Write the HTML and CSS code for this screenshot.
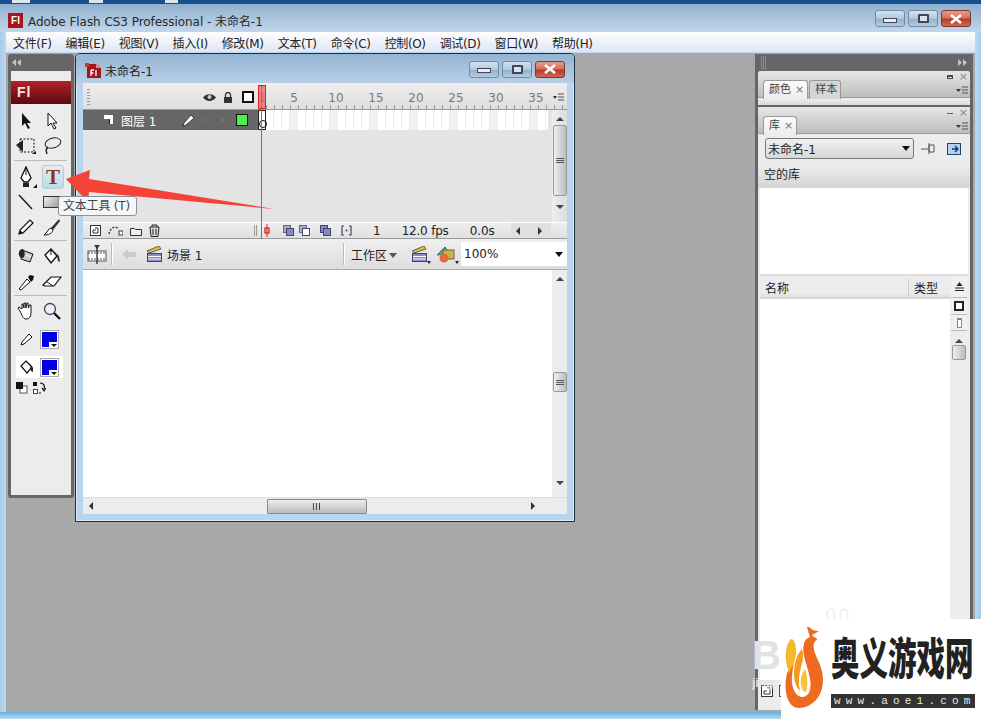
FILE: index.html
```html
<!DOCTYPE html>
<html lang="zh">
<head>
<meta charset="utf-8">
<title>Adobe Flash CS3 Professional</title>
<link rel="stylesheet" href="styles.css">
</head>
<body>
<div class="app">
  <div class="topstrip"><i class="tb a"></i><i class="tb b"></i><i class="tb c"></i></div>
  <header class="titlebar">
    <span class="fl-badge">Fl</span>
    <span class="apptitle">Adobe Flash CS3 Professional - 未命名-1</span>
    <div class="winbtns big">
      <button class="wb"><i class="g-min"></i></button><button class="wb"><i class="g-max"></i></button><button class="wb close"><svg width="14" height="10" viewBox="0 0 14 10"><path d="M2 1l10 8M12 1L2 9" stroke="#fff" stroke-width="2.6"/></svg></button>
    </div>
  </header>
  <nav class="menubar">
    <span>文件(F)</span><span>编辑(E)</span><span>视图(V)</span><span>插入(I)</span><span>修改(M)</span><span>文本(T)</span><span>命令(C)</span><span>控制(O)</span><span>调试(D)</span><span>窗口(W)</span><span>帮助(H)</span>
  </nav>
  <main class="workspace">
    <aside class="tools">
      <div class="dockhead"><svg width="10" height="7" viewBox="0 0 10 7"><path d="M4 0v7L0 3.500zM9 0v7L5 3.500z" fill="#c4c4c4"/></svg></div>
      <div class="toolsbody">
        <div class="logo">Fl</div>
        <div class="toolsec sec1">
          <div class="tool"><svg width="14" height="18" viewBox="0 0 14 18"><path d="M3 1v13l3-3 3 6 2-1-3-5h4z" fill="#111"/></svg></div>
          <div class="tool"><svg width="14" height="18" viewBox="0 0 14 18"><path d="M3 1v13l3-3 3 6 2-1-3-5h4z" fill="#fff" stroke="#111"/></svg></div>
          <div class="tool"><svg width="22" height="20" viewBox="0 0 22 20"><rect x="5" y="3" width="14" height="13" fill="none" stroke="#111" stroke-dasharray="2 1.5"/><path d="M1 9l7-5v12z" fill="#222"/><path d="M17 18h4v-3z" fill="#111"/></svg></div>
          <div class="tool"><svg width="20" height="20" viewBox="0 0 20 20"><ellipse cx="11" cy="7" rx="8" ry="5" fill="none" stroke="#222" transform="rotate(-15 11 7)"/><path d="M6 11l-2 3 1 4" fill="none" stroke="#222" stroke-width="1.4"/></svg></div>
        </div>
        <div class="toolsec sec2">
          <div class="tool hastri"><svg width="14" height="22" viewBox="0 0 14 22"><path d="M7 1l5 11-3 4H5l-3-4z" fill="#fff" stroke="#111" stroke-width="1.3"/><path d="M7 1v8" stroke="#111"/><rect x="4" y="17" width="6" height="4" fill="#222"/></svg></div>
          <div class="tool selected"><span class="tglyph">T</span></div>
          <div class="tool"><svg width="16" height="16" viewBox="0 0 16 16"><path d="M1 1l13 14" stroke="#111" stroke-width="1.3"/></svg></div>
          <div class="tool"><i class="recttool"></i></div>
          <div class="tool"><svg width="18" height="18" viewBox="0 0 18 18"><path d="M2 16l1-4L13 2l3 3L6 15z" fill="#fff" stroke="#111" stroke-width="1.2"/><path d="M2 16l1-4 3 3z" fill="#111"/></svg></div>
          <div class="tool"><svg width="18" height="18" viewBox="0 0 18 18"><path d="M16 1L8 10l2 2 7-9z" fill="#333"/><path d="M8 10c-3 1-3 3-4 4l-3 3c4 0 8-1 9-5z" fill="#fff" stroke="#111"/></svg></div>
        </div>
        <div class="toolsec sec3">
          <div class="tool"><svg width="18" height="16" viewBox="0 0 18 16"><path d="M5 2l11 4-3 8-9-3z" fill="#ccc" stroke="#111"/><path d="M6 1C3 1 1 4 2 7c1 3 3 4 5 2 1-2 1-6-1-8z" fill="#222"/><path d="M9 7l5 2" stroke="#fff"/></svg></div>
          <div class="tool"><svg width="18" height="18" viewBox="0 0 18 18"><path d="M8 2l6 7-6 7-6-8z" fill="#fff" stroke="#111" stroke-width="1.3"/><path d="M8 2v6" stroke="#111"/><path d="M11 4l5 5 1 6-2-1-1-5z" fill="#333"/></svg></div>
          <div class="tool"><svg width="18" height="18" viewBox="0 0 18 18"><path d="M2 16L10 6l3 3-9 8z" fill="#fff" stroke="#111"/><path d="M11 4l2-2 4 1-1 4-2 2z" fill="#111"/></svg></div>
          <div class="tool"><svg width="20" height="14" viewBox="0 0 20 14"><path d="M1 10l8-8h10l-7 9H3z" fill="#fff" stroke="#111" stroke-width="1.2"/><path d="M5 7l6 4" stroke="#111"/></svg></div>
        </div>
        <div class="toolsec sec4">
          <div class="tool"><svg width="18" height="18" viewBox="0 0 18 18"><path d="M3 9L1 6l1-1 3 2V2h1l1 4V1h1.500l.5 5 1-5h1l.5 5 1-3h1.500L14 10c0 4-1 7-5 7-3 0-4-4-6-8z" fill="#fff" stroke="#111"/></svg></div>
          <div class="tool"><svg width="18" height="18" viewBox="0 0 18 18"><circle cx="7" cy="7" r="5.500" fill="#eef" stroke="#444" stroke-width="1.300"/><path d="M11 11l6 6" stroke="#111" stroke-width="2.400"/></svg></div>
          <div class="tool short"><svg width="13" height="13" viewBox="0 0 13 13"><path d="M1 12l1-3 7-8 3 3-8 7z" fill="#fff" stroke="#111"/></svg></div>
          <div class="swatchwrap"><i class="swatch"></i></div>
        </div>
        <div class="fillrow">
          <div class="tool short"><svg width="15" height="15" viewBox="0 0 15 15"><path d="M7 1l6 6-5 6-6-7z" fill="#fff" stroke="#111" stroke-width="1.2"/><path d="M11 4l3 4v4l-2-1z" fill="#222"/></svg></div>
          <div class="swatchwrap"><i class="swatch"></i></div>
        </div>
        <div class="colorbtns">
          <svg width="12" height="12" viewBox="0 0 12 12"><rect x="4" y="4" width="7" height="7" fill="#fff" stroke="#555"/><rect x="0" y="0" width="7" height="7" fill="#111"/></svg>
          <svg width="13" height="13" viewBox="0 0 13 13"><rect x="0" y="0" width="4" height="4" fill="#111"/><rect x="0.500" y="7.500" width="4" height="4" fill="#fff" stroke="#444"/><path d="M7 1c4 0 5 3 4 6M9 6l2 3 2-3M8 11H6" fill="none" stroke="#111" stroke-width="1.200"/></svg>
        </div>
      </div>
    </aside>

    <section class="docwin">
      <div class="doctitle">
        <svg class="docicon" width="17" height="16" viewBox="0 0 17 16"><path d="M2 1h9l5 4v10H2z" fill="#a0161c"/><path d="M11 1l5 4h-5z" fill="#e88"/><rect x="0" y="0" width="4" height="4" fill="#c33"/><path d="M6 7v6M6 7h3M6 10h2.500M11 7v6" stroke="#fff" stroke-width="1.300"/></svg>
        <span class="doclabel">未命名-1</span>
        <div class="winbtns">
          <button class="wb"><i class="g-min"></i></button><button class="wb"><i class="g-max"></i></button><button class="wb close"><svg width="14" height="10" viewBox="0 0 14 10"><path d="M2 1l10 8M12 1L2 9" stroke="#fff" stroke-width="2.600"/></svg></button>
        </div>
      </div>
      <div class="timeline">
        <div class="tl-head">
          <div class="tl-headleft">
            <i class="grip"></i>
            <svg class="ic-eye" width="13" height="9" viewBox="0 0 13 9"><path d="M0 4.500C3 0 10 0 13 4.500 10 9 3 9 0 4.500z" fill="#333"/><circle cx="6.500" cy="4" r="2" fill="#ccc"/></svg>
            <svg class="ic-lock" width="10" height="11" viewBox="0 0 10 11"><path d="M2.500 5V3a2.500 2.500 0 015 0v2" fill="none" stroke="#333" stroke-width="1.300"/><rect x="1" y="5" width="8" height="6" fill="#333"/></svg>
            <i class="ic-square"></i>
          </div>
          <div class="ruler">
            <span class="r1">1</span><span class="r5">5</span><span>10</span><span>15</span><span>20</span><span>25</span><span>30</span><span>35</span>
            <svg class="panelmenu" width="12" height="9" viewBox="0 0 12 9"><path d="M0 3h4L2 6z" fill="#333"/><path d="M5 1h6M5 4h6M5 7h6" stroke="#555"/></svg>
          </div>
        </div>
        <div class="tl-main">
          <div class="tl-body">
            <div class="layerrow">
              <div class="layerinfo">
                <svg class="layicon" width="10" height="10" viewBox="0 0 10 10"><path d="M0 0h9v9H5V4H0z" fill="#fff"/><path d="M5 4h1v5H5z" fill="#222"/></svg>
                <span class="layname">图层 1</span>
                <svg class="laypen" width="13" height="13" viewBox="0 0 13 13"><path d="M1 12l1-3 7-8 3 3-8 7z" fill="#fff" stroke="#222" stroke-width=".8"/></svg>
                <i class="dot d1"></i><i class="dot d2"></i>
                <i class="laycolor"></i>
              </div>
              <div class="frames"><i class="kf"></i></div>
            </div>
            <div class="tl-empty"></div>
          </div>
          <div class="vscroll tlv">
            <i class="arr up"></i><i class="thumb tlthumb"><i class="thgrip"></i></i><i class="arr down"></i>
          </div>
        </div>
        <div class="tl-status">
          <div class="st-left">
            <svg width="11" height="11" viewBox="0 0 11 11"><rect x=".5" y=".5" width="10" height="10" fill="#fff" stroke="#333"/><path d="M5 3h3v5H3V5h3" fill="none" stroke="#333"/></svg>
            <svg width="15" height="11" viewBox="0 0 15 11"><path d="M1 9C2 3 7 0 11 4" fill="none" stroke="#333" stroke-width="1.300" stroke-dasharray="2 1.500"/><rect x="11" y="6" width="4" height="4" fill="#fff" stroke="#333"/></svg>
            <svg width="12" height="10" viewBox="0 0 12 10"><path d="M.5 2.500h4l1 1h6v6H.5z" fill="#eee" stroke="#333"/></svg>
            <svg width="11" height="13" viewBox="0 0 11 13"><path d="M1 3h9l-1 9.500H2zM3 3V1h5v2" fill="#ddd" stroke="#222"/><path d="M4 5v6M7 5v6" stroke="#222"/></svg>
            <i class="statgrip"></i>
          </div>
          <div class="st-right">
            <svg class="onion" width="6" height="13" viewBox="0 0 6 13"><path d="M3 0v13" stroke="#d22"/><rect x="1" y="4" width="4" height="5" fill="none" stroke="#d22" stroke-width="1.300"/></svg>
            <svg class="ob o1" width="11" height="11" viewBox="0 0 11 11"><rect x=".5" y=".5" width="7" height="7" fill="#aac" stroke="#669"/><rect x="3.500" y="3.500" width="7" height="7" fill="#8888c8" stroke="#446"/></svg>
            <svg class="ob o2" width="11" height="11" viewBox="0 0 11 11"><rect x=".5" y=".5" width="7" height="7" fill="#aac" stroke="#669"/><rect x="3.500" y="3.500" width="7" height="7" fill="#fff" stroke="#446"/></svg>
            <svg class="ob o3" width="11" height="11" viewBox="0 0 11 11"><rect x=".5" y=".5" width="7" height="7" fill="#88c" stroke="#446"/><rect x="3.500" y="3.500" width="7" height="7" fill="#8888c8" stroke="#446"/></svg>
            <svg class="ob o4" width="11" height="11" viewBox="0 0 11 11"><path d="M3 1H1v9h2M8 1h2v9H8" fill="none" stroke="#446" stroke-width="1.200"/><circle cx="5.500" cy="5.500" r="1" fill="#446"/></svg>
            <span class="st-frame">1</span><span class="st-fps">12.0 fps</span><span class="st-time">0.0s</span>
            <div class="st-scroll"><i class="tri-l"></i><i class="tri-r"></i></div>
          </div>
        </div>
        <i class="playline"></i>
        <i class="playhead"></i>
      </div>
      <div class="editbar">
        <svg class="filmic" width="20" height="19" viewBox="0 0 20 19"><path d="M7 0h6l-3 4z" fill="#333"/><rect x="1" y="6" width="18" height="10" fill="#fff" stroke="#555"/><path d="M1 8h18M1 14h18" stroke="#555" stroke-dasharray="2 1"/><path d="M10 2v17" stroke="#222" stroke-width="1.300"/></svg>
        <i class="ebsep"></i>
        <svg class="backarrow" width="15" height="11" viewBox="0 0 15 11"><path d="M0 5.500L6 0v3h8v5H6v3z" fill="#ccc"/></svg>
        <svg class="clapper" width="15" height="16" viewBox="0 0 15 16"><path d="M0 5L12 0l2 3L2 7z" fill="#d8c040" stroke="#665"/><rect x=".5" y="7.500" width="14" height="8" fill="#8a8ac8" stroke="#446"/><path d="M1 10.500h13M1 13h13" stroke="#fff"/></svg>
        <span class="scene">场景 1</span>
        <i class="ebsep sep2"></i>
        <span class="workarea">工作区<i class="tri-d sm"></i></span>
        <svg class="clapper c2" width="15" height="16" viewBox="0 0 15 16"><path d="M0 5L12 0l2 3L2 7z" fill="#d8c040" stroke="#665"/><rect x=".5" y="7.500" width="14" height="8" fill="#8a8ac8" stroke="#446"/><path d="M1 10.500h13M1 13h13" stroke="#fff"/></svg>
        <i class="tinytri"></i>
        <svg class="shapes" width="18" height="17" viewBox="0 0 18 17"><path d="M0 9L8 1l5 7z" fill="#49b38a" stroke="#276"/><rect x="6" y="4" width="11" height="9" fill="#c8b83a" stroke="#665"/><circle cx="7" cy="12" r="4.500" fill="#e8683a"/></svg>
        <i class="tinytri"></i>
        <div class="zoomsel"><span>100%</span><i class="tri-d"></i></div>
      </div>
      <div class="stage-row">
        <div class="stage"></div>
        <div class="vscroll stv">
          <i class="arr up"></i><i class="thumb stthumb"><i class="thgrip"></i></i><i class="arr down"></i>
        </div>
      </div>
      <div class="hscroll">
        <i class="tri-l"></i>
        <i class="hthumb"><i class="hgrip"></i></i>
        <i class="tri-r"></i>
      </div>
    </section>

    <aside class="rightdock">
      <div class="dockhead rh"><i class="rgrip"></i><svg width="10" height="7" viewBox="0 0 10 7"><path d="M1 0v7l4-3.500zM6 0v7l4-3.500z" fill="#c4c4c4"/></svg></div>
      <div class="panel colorp">
        <div class="paneltop">
          <div class="tabs">
            <span class="tab on">颜色 <em>×</em></span><span class="tab">样本</span>
          </div>
          <div class="pctrl"><i class="maxi"></i><b>×</b></div>
          <svg class="pmenu" width="14" height="9" viewBox="0 0 14 9"><path d="M2 3h5L4.500 6z" fill="#333"/><path d="M8 1h6M8 4h6M8 7h6" stroke="#555"/></svg>
        </div>
        <div class="panelfoot"></div>
      </div>
      <div class="panel libp">
        <div class="paneltop">
          <div class="tabs"><span class="tab on">库 <em>×</em></span></div>
          <div class="pctrl"><i class="mini"></i><b>×</b></div>
          <svg class="pmenu" width="14" height="9" viewBox="0 0 14 9"><path d="M2 3h5L4.500 6z" fill="#333"/><path d="M8 1h6M8 4h6M8 7h6" stroke="#555"/></svg>
        </div>
        <div class="libselrow">
          <div class="libsel"><span>未命名-1</span><i class="tri-d"></i></div>
          <svg width="14" height="12" viewBox="0 0 14 12"><path d="M0 6h7M8 2h5v7H8zM8 0v11" fill="none" stroke="#555"/></svg>
          <svg class="libnew" width="15" height="12" viewBox="0 0 15 12"><rect x=".5" y=".5" width="13" height="11" fill="#b8d0f0" stroke="#246"/><path d="M5 6h5M8 3l3 3-3 3" fill="none" stroke="#136" stroke-width="1.300"/></svg>
        </div>
        <div class="libcount">空的库</div>
        <div class="libpreview"></div>
        <div class="libtable">
          <div class="libmain">
            <div class="libcols"><span class="cn">名称</span><span class="ct">类型</span></div>
            <div class="liblist"></div>
          </div>
          <div class="libside">
            <i class="sb sort"><svg width="9" height="9" viewBox="0 0 9 9"><path d="M4.500 0l3 4h-6z" fill="#222"/><path d="M0 6h9M0 8.500h9" stroke="#222"/></svg></i>
            <i class="sb sq"><i class="sqi"></i></i>
            <i class="sb nar"><i class="nari"></i></i>
            <i class="arr up"></i>
            <i class="thumb libthumb"></i>
          </div>
        </div>
        <div class="libfoot">
          <svg width="12" height="12" viewBox="0 0 12 12"><rect x=".5" y=".5" width="11" height="11" fill="#fff" stroke="#333"/><path d="M6 3h3v6H3V6h3" fill="none" stroke="#333"/></svg>
          <i class="lf2"></i>
        </div>
      </div>
    </aside>

    <svg class="redarrow" width="230" height="50" viewBox="0 0 230 50"><path d="M0 9L24 0l-1 9 185 30-185-17-1 10z" fill="#f44336"/></svg>
    <div class="tooltip">文本工具 (T)</div>
  </main>
  <div class="bottomstrip"></div>
  <div class="faint"><span class="fb">B</span><span class="fj">jing</span></div>
  <div class="fainttop">∩∩</div>
  <div class="brand">
    <svg class="flame" width="44" height="82" viewBox="0 0 44 82">
      <path d="M25 0c3 3 6 4 10 4l-5 3-2 1c3 4 5 2 5 5-5 2-4 9 0 18 5 10 9 23 3 36-5 10-14 14-21 14C5 81 0 68 2 52 3 43 8 36 10 26c1 10-3 20-2 30 1 9 6 14 10 14 7 0 10-8 8-18-2-14-9-24-6-36 1-3 3-5 6-6-1-3-2-6-3-10z" fill="#ee6a1e"/>
      <path d="M7 12C3 16 1 24 2 34c1 6 3 12 3 12 3-7 8-14 7-24 0-5-2-10-5-10z" fill="#f5b92a"/>
      <path d="M18 22c-4 4-8 12-8 24 0 8 2 14 6 18-2-8-1-16 1-24 2-6 3-12 1-18z" fill="#f59a1e"/>
      <path d="M21 42c-3 4-5 10-4 16 1 4 2 7 5 7 2-6 2-15-1-23z" fill="#f7c23a"/>
    </svg>
    <div class="brandtext">
      <div class="brandname"><span>奥义游戏网</span></div>
      <div class="brandurl">www.aoe1.com</div>
    </div>
  </div>
</div>
</body>
</html>
```
FILE: styles.css
```css
* { box-sizing: border-box; margin: 0; padding: 0; }
html, body { width: 981px; height: 719px; overflow: hidden; }
body { font-family: "DejaVu Sans", "Noto Sans CJK SC", sans-serif; font-size: 12px; color: #222; background: #b9d5ef; }
i, em { font-style: normal; display: block; }
svg { display: block; flex: none; }
button { border: 0; background: none; font: inherit; }

.app { position: relative; width: 981px; height: 719px; display: flex; flex-direction: column; overflow: hidden; background: linear-gradient(90deg, #a8cbea, #bcd7f0 6px, #bcd7f0 975px, #9fd0ee); }
.topstrip { height: 4px; flex: none; background: #17508e; position: relative; display: flex; }
.tb { height: 3px; background: #dfe6ee; }
.tb.a { width: 18px; margin-left: 12px; }
.tb.b { width: 14px; margin-left: 59px; }
.tb.c { width: 13px; margin-left: 62px; }

.titlebar { height: 28px; flex: none; display: flex; align-items: center; padding: 4px 10px 0 8px; background: linear-gradient(180deg, #8fb0cf 0, #a5c0da 40%, #c2d6ea 100%); }
.fl-badge { width: 15px; height: 15px; background: #a8141c; color: #fff; font: bold 10px/15px "Liberation Sans", sans-serif; text-align: center; margin-right: 5px; }
.apptitle { font-size: 12px; color: #2a2a2a; letter-spacing: -.05px; }
.winbtns { margin-left: auto; display: flex; gap: 3px; }
.winbtns.big { margin-top: -3px; }
.wb { width: 30px; height: 17px; border: 1px solid #6e8caa; border-radius: 3px; display: flex; align-items: center; justify-content: center; background: linear-gradient(180deg, #d4e2ef, #b1c8de 50%, #93b0cc 55%, #b4cce0); }
.wb.close { border-color: #7a3a32; background: linear-gradient(180deg, #e49c8c, #d8705a 45%, #b83a28 55%, #d06a50); }
.g-min { width: 14px; height: 5px; background: #e8eef4; border: 1px solid #445; margin-top: 3px; }
.g-max { width: 11px; height: 9px; background: #d8e4ee; border: 2px solid #445; border-radius: 1px; }

.menubar { height: 20px; flex: none; margin: 0 6px; padding-left: 7px; display: flex; gap: 14px; align-items: center; background: linear-gradient(180deg, #fff, #dfe5f3); font-size: 12px; color: #222; }
.menubar span { white-space: nowrap; letter-spacing: -.35px; }

.workspace { flex: 1; position: relative; margin: 1px 6px 0; background: #a8a8a8; }
.bottomstrip { height: 7px; flex: none; background: linear-gradient(180deg, #63b2df, #bcd7f0); }

.dockhead { height: 17px; background: #666; display: flex; align-items: center; padding: 0 6px; }

/* Tools */
.tools { position: absolute; left: 2px; top: 1px; width: 66px; height: 444px; display: flex; flex-direction: column; background: #666; border-radius: 3px; padding: 0 3px 3px; }
.tools .dockhead { padding: 0 1px; }
.toolsbody { flex: 1; background: #ececec; position: relative; }
.logo { height: 23px; margin-top: 10px; background: linear-gradient(180deg, #b4222a, #5c0810); color: #f5e4d8; font: bold 14px/23px "Liberation Sans", sans-serif; padding-left: 6px; letter-spacing: 1px; }
.toolsec { display: grid; grid-template-columns: 24px 28px; grid-auto-rows: 25px; justify-items: center; align-items: center; margin: 0 4px 0 3px; border-top: 1px solid #bbb; }
.sec1 { border-top: 0; padding-top: 4px; padding-bottom: 2px; }
.sec2 { padding-top: 3px; padding-bottom: 1px; }
.sec3 { padding-top: 2px; grid-auto-rows: 26px; }
.sec4 { padding-top: 1px; grid-auto-rows: 28px; padding-bottom: 3px; }
.tool { width: 24px; height: 24px; display: flex; align-items: center; justify-content: center; position: relative; }
.tool.short { height: 20px; }
.hastri::after { content: ""; position: absolute; right: 1px; bottom: 1px; border-left: 4px solid transparent; border-bottom: 4px solid #111; }
.selected { width: 22px; height: 24px; margin-left: 2px; background: linear-gradient(180deg, #e2eff6, #bcd9e6); border: 1px solid #b4ccd8; border-radius: 3px; }
.tglyph { font: bold 21px/22px "Liberation Serif", serif; color: #8a3a1e; }
.recttool { width: 18px; height: 12px; background: linear-gradient(135deg, #eee, #999); border: 1px solid #333; }
.swatchwrap { width: 19px; height: 19px; background: #fff; border: 1px solid #aaa; padding: 1px; position: relative; margin-left: -6px; }
.swatch { width: 100%; height: 100%; background: #0000e6; }
.swatchwrap::after { content: ""; position: absolute; right: 0; bottom: 0; width: 9px; height: 6px; background: #fff; }
.swatchwrap::before { content: ""; position: absolute; right: 1px; bottom: 1px; z-index: 1; border: 3px solid transparent; border-top-color: #111; border-bottom: 0; }
.fillrow { display: flex; align-items: center; gap: 4px; background: #fff; height: 22px; margin: 0 8px 0 5px; }
.fillrow .tool { width: 20px; }
.fillrow .swatchwrap { margin-left: 0; }
.colorbtns { display: flex; gap: 5px; padding: 4px 0 0 5px; }

/* Document window */
.docwin { position: absolute; left: 69px; top: 0; width: 500px; height: 469px; background: #b9d4ef; border: 1px solid #1d2f3a; border-radius: 5px 5px 0 0; padding: 0 7px 7px; display: flex; flex-direction: column; box-shadow: inset 0 0 0 1px #dfe9f3; }
.doctitle { height: 29px; flex: none; margin: 0 -7px; padding: 4px 9px 0 9px; display: flex; align-items: center; background: linear-gradient(180deg, #94b4d2, #b9d0e6); border-radius: 4px 4px 0 0; }
.doctitle .winbtns { margin-top: -3px; }
.docicon { margin-right: 3px; }
.doclabel { font-size: 12px; color: #222; }
.timeline { height: 156px; flex: none; display: flex; flex-direction: column; position: relative; background: #e4e4e4; }
.tl-head { height: 27px; display: flex; background: linear-gradient(180deg, #eee, #dedede); border-bottom: 1px solid #999; flex: none; }
.tl-headleft { width: 175px; position: relative; display: flex; align-items: center; flex: none; padding-top: 2px; }
.grip { width: 3px; height: 16px; margin-left: 4px; background: repeating-linear-gradient(180deg, #999 0 1px, transparent 1px 3px); }
.ic-eye { margin-left: 113px; }
.ic-lock { margin-left: 7px; }
.ic-square { width: 12px; height: 12px; border: 2px solid #111; background: #fff; margin-left: 9px; }
.ruler { flex: 1; position: relative; display: flex; align-items: center; color: #777; font-size: 12px; padding-top: 3px; background: repeating-linear-gradient(90deg, #999 0 1px, transparent 1px 8px) 0 100% / 100% 4px no-repeat; }
.ruler span { width: 40px; flex: none; text-align: center; }
.ruler .r1 { width: 8px; margin-right: 24px; }
.ruler .r5 { width: 8px; margin-right: 18px; }
.panelmenu { position: absolute; right: 2px; top: 10px; }
.tl-main { flex: 1; display: flex; min-height: 0; }
.tl-body { flex: 1; display: flex; flex-direction: column; }
.layerrow { height: 20px; display: flex; flex: none; }
.layerinfo { width: 175px; background: #666; display: flex; align-items: center; color: #fff; flex: none; padding-left: 21px; }
.layname { margin-left: 7px; width: 60px; white-space: nowrap; }
.laypen { margin-left: 1px; }
.dot { width: 2px; height: 2px; background: #7c7c7c; }
.d1 { margin-left: 9px; }
.d2 { margin-left: 16px; }
.laycolor { width: 12px; height: 12px; background: #4cf04c; border: 1px solid #111; margin-left: 12px; }
.frames { flex: 1; margin-right: 4px; position: relative; background-color: #fff; background-image: linear-gradient(90deg, #f0f0f0 8px, transparent 8px), linear-gradient(90deg, transparent 7px, #ececec 7px); background-size: 40px 100%, 8px 100%; background-position: 32px 0, 0 0; }
.kf { position: absolute; left: 0; top: 0; width: 8px; height: 20px; border: 1px solid #222; background: #fff; }
.kf::after { content: ""; position: absolute; left: 0; bottom: 1px; width: 6px; height: 6px; border: 1px solid #111; border-radius: 50%; }
.tl-empty { flex: 1; background: #e4e4e4; }
.vscroll { width: 15px; flex: none; background: #ececec; display: flex; flex-direction: column; align-items: center; position: relative; }
.tlv { background: linear-gradient(90deg, #eee, #ddd); }
.arr { width: 0; height: 0; border: 4px solid transparent; flex: none; }
.arr.up { border-bottom: 4px solid #444; border-top: 0; }
.arr.down { border-top: 4px solid #444; border-bottom: 0; }
.thumb { width: 14px; background: linear-gradient(90deg, #f0f0f0, #bbb); border: 1px solid #999; border-radius: 2px; display: flex; align-items: center; justify-content: center; }
.thgrip { width: 8px; height: 5px; background: repeating-linear-gradient(180deg, #555 0 1px, transparent 1px 2px); }
.tlthumb { height: 71px; margin-top: 4px; }
.tlv .arr.up { margin-top: 7px; }
.tlv .arr.down { margin-top: 9px; }
.tl-status { height: 17px; flex: none; display: flex; background: linear-gradient(180deg, #eee, #e0e0e0); border-bottom: 1px solid #999; border-top: 1px solid #fff; align-items: center; }
.st-left { width: 175px; flex: none; display: flex; align-items: center; gap: 7px; padding-left: 7px; }
.statgrip { width: 5px; height: 11px; margin-left: 87px; background: repeating-linear-gradient(90deg, #999 0 1px, transparent 1px 2px); }
.st-right { flex: 1; display: flex; align-items: center; position: relative; }
.onion { margin-left: 6px; }
.ob.o1 { margin-left: 13px; }
.ob.o2 { margin-left: 5px; }
.ob.o3 { margin-left: 10px; }
.ob.o4 { margin-left: 10px; }
.st-frame { margin-left: 21px; color: #222; }
.st-fps { margin-left: 21px; color: #222; letter-spacing: -.2px; }
.st-time { margin-left: 21px; color: #222; letter-spacing: -.1px; }
.st-scroll { margin-left: 16px; width: 40px; height: 15px; background: #e0e0e0; display: flex; align-items: center; justify-content: space-between; padding: 0 9px 0 5px; }
.tri-l { width: 0; height: 0; border: 4px solid transparent; border-right: 4px solid #333; border-left: 0; }
.tri-r { width: 0; height: 0; border: 4px solid transparent; border-left: 4px solid #333; border-right: 0; }
.tri-d { width: 0; height: 0; border: 4px solid transparent; border-top: 5px solid #111; border-bottom: 0; }
.tri-d.sm { display: inline-block; margin-left: 2px; border-top-color: #555; vertical-align: 2px; }
.playline { position: absolute; left: 178px; top: 2px; bottom: 0; width: 1px; background: #e04a4a; }
.playhead { position: absolute; left: 175px; top: 2px; width: 8px; height: 24px; background: rgba(240,90,90,.7); border: 1px solid #d22; }

.editbar { height: 31px; flex: none; display: flex; align-items: center; background: linear-gradient(180deg, #efefef, #ddd); border-bottom: 1px solid #aaa; }
.filmic { margin-left: 4px; }
.ebsep { width: 1px; height: 22px; background: #bbb; margin-left: 4px; box-shadow: 1px 0 #fff; }
.backarrow { margin-left: 10px; }
.clapper { margin-left: 10px; }
.clapper.c2 { margin-left: 15px; }
.scene { margin-left: 5px; color: #222; width: 176px; }
.sep2 { margin-left: 0; }
.workarea { margin-left: 7px; color: #222; white-space: nowrap; }
.tinytri { width: 0; height: 0; border: 2px solid transparent; border-top: 3px solid #222; border-bottom: 0; align-self: flex-end; margin: 0 0 5px 0; }
.shapes { margin-left: 6px; }
.zoomsel { margin-left: 2px; flex: 1; height: 24px; background: #fff; display: flex; align-items: center; justify-content: space-between; padding: 0 4px 0 3px; color: #222; }
.stage-row { flex: 1; display: flex; min-height: 0; }
.stage { flex: 1; background: #fff; }
.stv .arr.up { margin-top: 7px; }
.stv .stthumb { height: 20px; margin-top: 91px; }
.stv .arr.down { margin-top: 89px; }
.hscroll { height: 17px; flex: none; background: #ececec; display: flex; align-items: center; padding: 0 27px 0 6px; border-top: 1px solid #ddd; }
.hthumb { width: 100px; height: 15px; margin: 0 164px 0 174px; background: linear-gradient(180deg, #eee, #bbb); border: 1px solid #888; border-radius: 1px; display: flex; justify-content: center; align-items: center; flex: none; }
.hgrip { width: 8px; height: 7px; background: repeating-linear-gradient(90deg, #444 0 1px, transparent 1px 3px); }

/* Right dock */
.rightdock { position: absolute; left: 749px; top: 1px; width: 218px; height: 656px; background: #666; padding: 0 3px; display: flex; flex-direction: column; }
.rh { margin: 0 -3px; justify-content: space-between; }
.rgrip { width: 6px; height: 14px; background: repeating-linear-gradient(90deg, #8a8a8a 0 1px, transparent 1px 2px); }
.panel { background: #ececec; border-radius: 3px 3px 0 0; display: flex; flex-direction: column; }
.colorp { height: 34px; flex: none; margin-bottom: 2px; overflow: hidden; }
.libp { flex: 1; min-height: 0; }
.paneltop { height: 27px; flex: none; position: relative; background: linear-gradient(180deg, #e6e6e6, #bdbdbd); border-bottom: 1px solid #999; padding: 9px 0 0 5px; }
.tabs { display: flex; gap: 1px; height: 18px; }
.tab { height: 19px; padding: 0 3px 0 5px; background: #d5d5d5; border: 1px solid #999; border-bottom: 0; border-radius: 3px 3px 0 0; font-size: 11px; line-height: 17px; color: #444; white-space: nowrap; display: flex; }
.tab.on { background: linear-gradient(180deg, #fafafa, #ececec); height: 19px; position: relative; z-index: 1; }
.tab em { color: #777; margin-left: 4px; }
.pctrl { position: absolute; right: 2px; top: 1px; display: flex; gap: 6px; align-items: center; color: #888; font-size: 11px; }
.pctrl b { font-weight: normal; line-height: 10px; }
.maxi { width: 6px; height: 4px; border: 1px solid #444; border-top-width: 2px; }
.mini { width: 6px; height: 1px; background: #666; }
.pmenu { position: absolute; right: 2px; top: 15px; }
.panelfoot { height: 8px; background: linear-gradient(180deg, #f0f0f0, #d8d8d8); }
.libselrow { flex: none; height: 29px; display: flex; align-items: center; padding: 0 5px 0 7px; gap: 7px; background: #ececec; }
.libnew { margin-left: 5px; }
.libsel { width: 149px; height: 21px; display: flex; align-items: center; justify-content: space-between; border: 1px solid #777; border-radius: 3px; background: linear-gradient(180deg, #f0f0f0, #d8d8d8); padding: 0 3px 0 2px; color: #222; font-size: 12px; }
.libcount { height: 25px; flex: none; padding: 0 6px; line-height: 25px; background: linear-gradient(180deg, #eee, #d5d5d5); color: #222; font-size: 12px; }
.libpreview { height: 88px; flex: none; background: #fff; margin: 0 2px; border-bottom: 2px solid #ddd; }
.libtable { flex: 1; min-height: 0; display: flex; margin: 0 2px; }
.libmain { flex: 1; display: flex; flex-direction: column; }
.libcols { height: 23px; flex: none; background: linear-gradient(180deg, #ececec 75%, #d4d4d4); display: flex; align-items: center; color: #222; position: relative; }
.cn { margin-left: 5px; width: 144px; border-right: 1px solid #ccc; }
.ct { margin-left: 5px; }
.liblist { flex: 1; background: #fff; }
.libside { width: 18px; flex: none; background: #ececec; display: flex; flex-direction: column; align-items: center; }
.sb { width: 16px; display: flex; align-items: center; justify-content: center; border-bottom: 1px solid #bbb; background: #f0f0f0; flex: none; }
.sort { height: 22px; }
.sq { height: 17px; }
.nar { height: 16px; }
.sqi { width: 10px; height: 10px; border: 2px solid #222; background: #fff; }
.nari { width: 5px; height: 10px; border: 1px solid #888; border-top-width: 2px; background: #fff; }
.libside .arr.up { margin-top: 8px; }
.libthumb { height: 15px; margin-top: 2px; }
.libfoot { height: 30px; flex: none; display: flex; align-items: center; gap: 6px; padding: 0 0 8px 3px; background: #ececec; }
.lf2 { width: 12px; height: 12px; border: 1px solid #555; }

.redarrow { position: absolute; left: 60px; top: 117px; }
.tooltip { position: absolute; left: 52px; top: 143px; width: 79px; height: 20px; background: #f4f6f8; border: 1px solid #8a8f98; border-radius: 3px; font-size: 12px; line-height: 18px; padding-left: 4px; color: #444; white-space: nowrap; letter-spacing: -.2px; }

/* Watermark */
.faint { position: absolute; left: 752px; top: 636px; color: #e2e2e2; display: flex; flex-direction: column; }
.fb { font: bold 40px/38px "Liberation Sans", sans-serif; }
.fj { font: bold 12px/12px "Liberation Sans", sans-serif; margin-top: 3px; }
.fainttop { position: absolute; left: 824px; top: 606px; font-size: 18px; color: #eee; line-height: 14px; }
.brand { position: absolute; right: 0; bottom: 0; width: 200px; height: 100px; background: #fff; display: flex; padding: 8px 0 0 3px; }
.brandtext { margin-left: 3px; width: 144px; }
.brandname { height: 50px; padding-top: 6px; }
.brandname span { display: block; font: 900 28.500px/29px "Noto Sans CJK SC", sans-serif; color: #222; white-space: nowrap; transform: scaleY(1.55); transform-origin: 0 0; }
.brandurl { margin-top: 17px; height: 14px; background: #333; color: #e8e8e8; font: 11px/14px "Liberation Mono", monospace; letter-spacing: 5.200px; padding-left: 3px; white-space: nowrap; overflow: hidden; }
```
